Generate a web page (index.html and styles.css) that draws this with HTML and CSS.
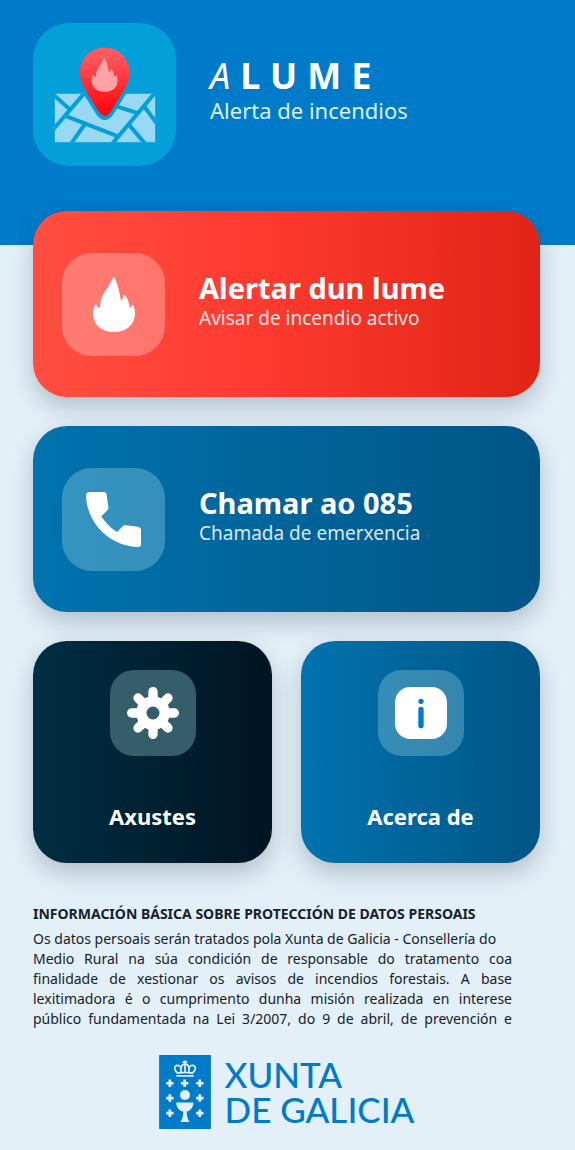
FILE: index.html
```
<!DOCTYPE html>
<html lang="gl">
<head>
    <meta charset="UTF-8">
    <meta name="viewport" content="width=device-width, initial-scale=1.0">
    <title>ALUME - Alerta de incendios</title>
    <link rel="stylesheet" href="styles.css">
</head>
<body>

    <!-- Shared icons -->
    <svg class="defs" width="0" height="0" aria-hidden="true">
        <symbol id="flame" viewBox="0 0 125 164">
            <path d="M61 0C56 8 48 28 36 43C25 58 21 72 21 92C16 92 12 88 9 81C3 86 0 96 0 108C0 142 26 164 62 164C100 164 125 142 125 108C125 96 122 86 117 81C116 86 113 90 109 92C108 74 102 58 91 53C92 61 88 67 83 69C80 48 74 24 65 4Q62 0 61 0Z"/>
        </symbol>
    </svg>

    <header class="header">
        <div class="app-logo">
            <svg viewBox="37 37 430 430" aria-hidden="true">
                <defs>
                    <linearGradient id="pinFill" x1="0" y1="0" x2="0" y2="1">
                        <stop offset="0.1" stop-color="#ff5a60"/>
                        <stop offset="0.9" stop-color="#ff0a10"/>
                    </linearGradient>
                    <clipPath id="mapClip"><rect x="102" y="249" width="303" height="147"/></clipPath>
                </defs>
                <g clip-path="url(#mapClip)">
                    <rect x="102" y="249" width="303" height="147" fill="#99d9f4"/>
                    <path class="road" d="M194 245L96 359M98 252L150 299M138 318L293 378M192 343L150 402M408 242L272 404M286 287L354 309M370 286L412 343M324 341L376 402"/>
                </g>
                <path class="pin" d="M253 111C295 111 328 145 328 187C328 215 305 250 268 308Q253 328 238 308C201 250 178 215 178 187C178 145 211 111 253 111Z"/>
                <use href="#flame" x="213" y="141" width="79" height="103" fill="#ffa3a7"/>
            </svg>
        </div>
        <div class="brand">
            <h1><em>A</em>LUME</h1>
            <p>Alerta de incendios</p>
        </div>
    </header>

    <main class="content">
        <!-- Main actions -->
        <button type="button" class="card card-red">
            <span class="card-icon">
                <svg class="icon-flame" aria-hidden="true"><use href="#flame"/></svg>
            </span>
            <span class="card-text">
                <strong>Alertar dun lume</strong>
                <span>Avisar de incendio activo</span>
            </span>
        </button>

        <button type="button" class="card card-blue">
            <span class="card-icon">
                <svg class="icon-phone" viewBox="0 0 165 165" aria-hidden="true">
                    <path d="M11 0H53Q61 0 62 8L67 46Q68 51 64 55L46 73C58 92 74 108 93 120L109 104Q113 99 119 100L156 104Q165 106 165 114V157Q165 165 156 165C72 162 4 96 0 12Q0 0 11 0Z"/>
                </svg>
            </span>
            <span class="card-text">
                <strong>Chamar ao 085</strong>
                <span>Chamada de emerxencia</span>
            </span>
        </button>

        <div class="tiles">
            <button type="button" class="tile tile-dark">
                <span class="tile-icon">
                    <svg viewBox="-78 -78 156 156" aria-hidden="true">
                        <circle r="35" fill="none" stroke="#fff" stroke-width="31"/>
                        <path class="teeth" d="M0-40V-64M0 40V64M-40 0H-64M40 0H64M-28-28L-45-45M28-28L45-45M-28 28L-45 45M28 28L45 45"/>
                    </svg>
                </span>
                <strong>Axustes</strong>
            </button>
            <button type="button" class="tile tile-blue">
                <span class="tile-icon">
                    <svg viewBox="0 0 156 156" aria-hidden="true">
                        <rect width="156" height="156" rx="46" fill="#fff"/>
                        <circle cx="78" cy="43" r="8" fill="#007bca"/>
                        <rect x="70" y="59" width="16" height="65" rx="8" fill="#007bca"/>
                    </svg>
                </span>
                <strong>Acerca de</strong>
            </button>
        </div>

        <!-- Data protection notice, cut off after the fifth line -->
        <section class="privacy">
            <h2>INFORMACIÓN BÁSICA SOBRE PROTECCIÓN DE DATOS PERSOAIS</h2>
            <p class="privacy-text">
                <span class="first">Os datos persoais serán tratados pola Xunta de Galicia - Consellería do</span>
                <span>Medio Rural na súa condición de responsable do tratamento coa</span>
                <span>finalidade de xestionar os avisos de incendios forestais. A base</span>
                <span>lexitimadora é o cumprimento dunha misión realizada en interese</span>
                <span>público fundamentada na Lei 3/2007, do 9 de abril, de prevención e</span>
                <span class="first">defensa contra os incendios forestais de Galicia.</span>
            </p>
        </section>
    </main>

    <footer class="footer">
        <svg class="crest" viewBox="39 30 154 220" aria-hidden="true">
            <rect x="39" y="30" width="154" height="220" fill="#007bca"/>
            <g fill="none" stroke="#e3f0f8" stroke-width="5" stroke-linecap="round">
                <path d="M92 92H140M94 84C88 78 82 70 87 64C93 57 103 62 104 70V82M138 84C144 78 150 70 145 64C139 57 129 62 128 70V82M104 70C105 60 111 57 116 57C121 57 127 60 128 70M116 48V82M111 51H121M94 84Q116 79 138 84"/>
            </g>
            <path stroke="#e3f0f8" stroke-width="8" d="M60 114H82M71 103V125M104 114H126M115 103V125M149 114H171M160 103V125M60 158H82M71 147V169M149 158H171M160 147V169M60 203H82M71 192V214M149 203H171M160 192V214"/>
            <circle cx="116" cy="149" r="15" fill="#e3f0f8"/>
            <path fill="#e3f0f8" d="M90 171H141C141 187 131 196 121 198C121 212 124 222 130 229H102C108 222 111 212 111 198C100 196 90 187 90 171Z"/>
        </svg>
        <p>
            <span>XUNTA</span>
            <span>DE GALICIA</span>
        </p>
    </footer>

</body>
</html>
```
FILE: styles.css
```
* {
    box-sizing: border-box;
}

body {
    margin: 0;
    background-color: #e3f0f8;
    color: #16212a;
    font-family: "Noto Sans", sans-serif;
}

h1, h2, p {
    margin: 0;
}

.defs {
    display: block;
}

/* Header */
.header {
    display: flex;
    align-items: flex-start;
    gap: 34px;
    padding: 23px 33px 79px;
    background-color: #007bca;
    color: #fff;
}

.app-logo {
    flex: none;
    width: 143px;
    height: 143px;
    border-radius: 36px;
    background-color: #029fd9;
}

.app-logo svg {
    display: block;
    width: 100%;
    height: 100%;
}

.road {
    fill: none;
    stroke: #029fd9;
    stroke-width: 12;
}

.pin {
    fill: url(#pinFill);
    stroke: #029fd9;
    stroke-width: 22;
    paint-order: stroke;
}

.brand {
    padding-top: 35px;
}

.brand h1 {
    font-size: 36px;
    line-height: 36px;
    font-weight: 700;
    letter-spacing: 10px;
}

.brand h1 em {
    font-weight: 400;
}

.brand p {
    font-size: 22px;
    line-height: 32px;
    color: #dcf0fc;
}

/* Buttons */
.content {
    display: flex;
    flex-direction: column;
    gap: 29px;
    margin-top: -34px;
    padding: 0 35px 0 33px;
}

button {
    border: none;
    border-radius: 34px;
    color: #fff;
    font-family: inherit;
    cursor: pointer;
    box-shadow: 0 10px 24px rgba(0, 20, 40, 0.22);
}

.card {
    display: flex;
    align-items: center;
    gap: 34px;
    min-height: 186px;
    padding: 0 29px;
    text-align: left;
}

.card-red {
    background: linear-gradient(to right, #ff4e42, #ff3a2f 45%, #df2416);
}

.card-blue,
.tile-blue {
    background: linear-gradient(to right, #0073ae, #005585);
}

.tile-dark {
    background: linear-gradient(to right, #002e43, #001422);
}

.card-icon,
.tile-icon {
    display: flex;
    flex: none;
    align-items: center;
    justify-content: center;
    background-color: rgba(210, 250, 255, 0.25);
}

.card-red .card-icon {
    background-color: rgba(255, 255, 255, 0.27);
}

.tile-dark .tile-icon {
    background-color: #365e6a;
}

.card-icon {
    width: 103px;
    height: 103px;
    border-radius: 30px;
}

.card-icon svg {
    fill: #fff;
}

.icon-flame {
    width: 42px;
    height: 55px;
}

.icon-phone {
    width: 55px;
    height: 55px;
}

.card-text {
    display: flex;
    flex-direction: column;
    padding-bottom: 5px;
}

.card-text strong {
    font-size: 29px;
    line-height: 32px;
}

.card-text span {
    font-size: 19px;
    line-height: 28px;
    opacity: 0.85;
}

.tiles {
    display: grid;
    grid-template-columns: 1fr 1fr;
    gap: 29px;
}

.tile {
    display: flex;
    flex-direction: column;
    align-items: center;
    justify-content: space-between;
    min-height: 222px;
    padding: 29px 16px 33px;
}

.tile-icon {
    width: 86px;
    height: 86px;
    border-radius: 24px;
}

.tile-icon svg {
    width: 52px;
    height: 52px;
}

.teeth {
    stroke: #fff;
    stroke-width: 28;
    stroke-linecap: round;
}

.tile strong {
    font-size: 22px;
    line-height: 28px;
}

/* Data protection notice */
.privacy {
    padding: 12px 28px 0 0;
}

.privacy h2 {
    font-size: 14px;
    line-height: 20px;
    white-space: nowrap;
}

.privacy-text {
    max-height: 103px;
    margin-top: 5px;
    overflow: hidden;
    font-size: 14px;
    line-height: 20px;
}

.privacy-text span {
    display: block;
    text-align: justify;
    text-align-last: justify;
    white-space: nowrap;
}

.privacy-text .first {
    text-align-last: left;
}

/* Footer */
.footer {
    display: flex;
    align-items: center;
    justify-content: center;
    gap: 14px;
    padding: 23px 2px 20px 0;
}

.crest {
    width: 52px;
    height: 74px;
}

.footer p {
    color: #007bca;
    font-family: Lato, sans-serif;
    font-size: 35px;
    font-weight: 500;
    line-height: 35px;
}

.footer span {
    display: block;
}
```
